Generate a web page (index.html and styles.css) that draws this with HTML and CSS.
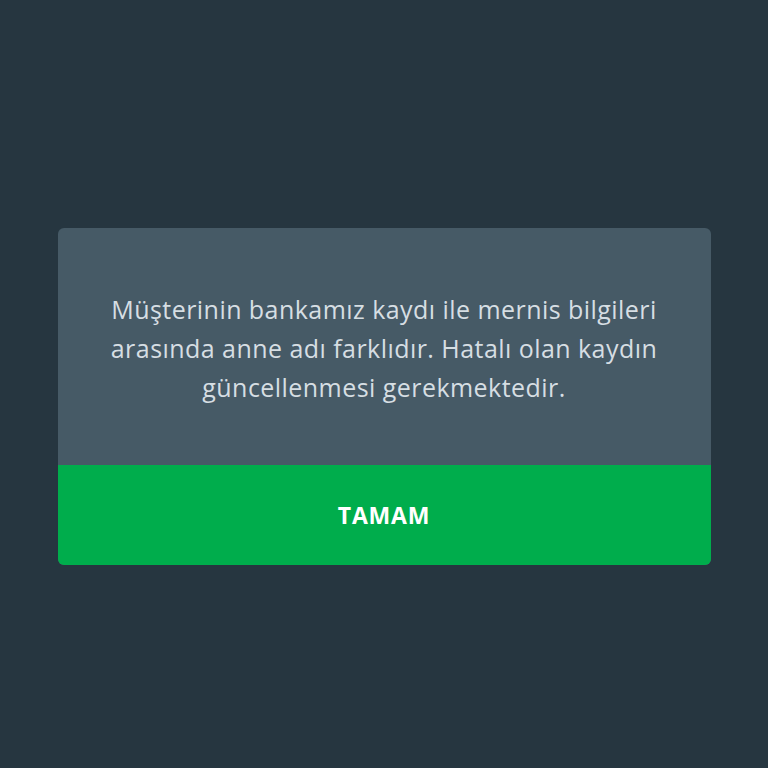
FILE: index.html
```html
<!DOCTYPE html>
<html>
<head>
<meta charset="utf-8">
<link rel="stylesheet" href="styles.css">
</head>
<body>
<div class="screen">
  <div class="dialog">
    <div class="message">Müşterinin bankamız kaydı ile mernis bilgileri arasında anne adı farklıdır. Hatalı olan kaydın güncellenmesi gerekmektedir.</div>
    <div class="button">TAMAM</div>
  </div>
</div>
</body>
</html>
```
FILE: styles.css
```css
html, body {
  margin: 0;
  padding: 0;
  background: #263640;
}
.screen {
  width: 768px;
  height: 768px;
  display: flex;
  align-items: center;
  justify-content: center;
}
.dialog {
  width: 653px;
  margin-top: 25px;
  border-radius: 6px;
  overflow: hidden;
  background: #465a66;
  display: flex;
  flex-direction: column;
}
.message {
  height: 237px;
  box-sizing: border-box;
  padding: 62px 36px 0;
  text-align: center;
  font-family: "Open Sans", sans-serif;
  font-size: 25px;
  letter-spacing: 0.45px;
  line-height: 39px;
  color: #d6dee3;
}
.button {
  height: 100px;
  background: #00ad4c;
  display: flex;
  align-items: center;
  justify-content: center;
  font-family: "Open Sans", sans-serif;
  font-weight: 700;
  font-size: 23px;
  letter-spacing: 0.8px;
  color: #ffffff;
}
```
